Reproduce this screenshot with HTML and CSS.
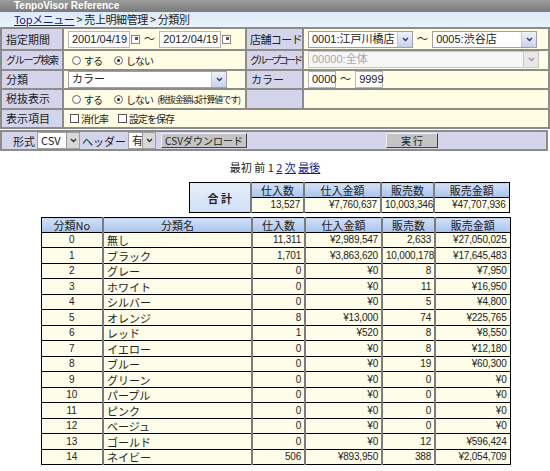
FILE: index.html
```html
<!DOCTYPE html>
<html lang="ja">
<head>
    <meta charset="UTF-8">
    <title>TenpoVisor Reference</title>
    <link rel="stylesheet" href="styles.css">
</head>
<body>
    <div class="titlebar">TenpoVisor Reference</div>
    <div class="crumbs"><a href="#">Topメニュー</a> &gt; 売上明細管理 &gt; 分類別</div>

    <table class="cond">
        <colgroup>
            <col style="width: 62px">
            <col style="width: 183px">
            <col style="width: 57px">
            <col style="width: 246px">
        </colgroup>
        <tr class="tall">
            <th class="lab">指定期間</th>
            <td class="val">
                <span class="txt date">2001/04/19</span><span class="cal"><svg width="9" height="9" viewBox="0 0 9 9"><rect x="0.5" y="0.5" width="8" height="8" fill="#fff" stroke="#888"/><rect x="4" y="2" width="3" height="3" fill="#555"/></svg></span>
                <span class="tilde">～</span>
                <span class="txt date">2012/04/19</span><span class="cal"><svg width="9" height="9" viewBox="0 0 9 9"><rect x="0.5" y="0.5" width="8" height="8" fill="#fff" stroke="#888"/><rect x="4" y="2" width="3" height="3" fill="#555"/></svg></span>
            </td>
            <th class="lab shopl">店舗コード</th>
            <td class="val">
                <span class="sel shop"><span class="sel-text">0001:江戸川橋店</span><span class="arr"><svg width="7" height="5" viewBox="0 0 7 5"><path d="M1 1 L3.5 3.5 L6 1" fill="none" stroke="#2a3a7a" stroke-width="1.4"/></svg></span></span>
                <span class="tilde">～</span>
                <span class="sel shop"><span class="sel-text">0005:渋谷店</span><span class="arr"><svg width="7" height="5" viewBox="0 0 7 5"><path d="M1 1 L3.5 3.5 L6 1" fill="none" stroke="#2a3a7a" stroke-width="1.4"/></svg></span></span>
            </td>
        </tr>
        <tr>
            <th class="lab tight">グループ検索</th>
            <td class="val">
                <span class="radio"></span><span class="opt">する</span>
                <span class="radio on"></span><span class="opt">しない</span>
            </td>
            <th class="lab tighter">グループコード</th>
            <td class="val">
                <span class="sel wide off"><span class="sel-text">00000:全体</span><span class="arr"><svg width="7" height="5" viewBox="0 0 7 5"><path d="M1 1 L3.5 3.5 L6 1" fill="none" stroke="#999" stroke-width="1.4"/></svg></span></span>
            </td>
        </tr>
        <tr>
            <th class="lab">分類</th>
            <td class="val">
                <span class="sel cat"><span class="sel-text">カラー</span><span class="arr"><svg width="7" height="5" viewBox="0 0 7 5"><path d="M1 1 L3.5 3.5 L6 1" fill="none" stroke="#2a3a7a" stroke-width="1.4"/></svg></span></span>
            </td>
            <th class="lab">カラー</th>
            <td class="val">
                <span class="txt code">0000</span>
                <span class="tilde">～</span>
                <span class="txt code">9999</span>
            </td>
        </tr>
        <tr>
            <th class="lab">税抜表示</th>
            <td class="val">
                <span class="radio"></span><span class="opt">する</span>
                <span class="radio on"></span><span class="opt">しない</span>
                <span class="note">(税抜金額は計算値です)</span>
            </td>
            <th class="lab"></th>
            <td class="val"></td>
        </tr>
        <tr>
            <th class="lab">表示項目</th>
            <td class="val" colspan="3">
                <span class="check"></span><span class="opt">消化率</span>
                <span class="check"></span><span class="opt">設定を保存</span>
            </td>
        </tr>
    </table>

    <div class="actions">
        <div class="export">
            <span>形式</span>
            <span class="sel small fmt"><span class="sel-text">CSV</span><span class="arr"><svg width="7" height="5" viewBox="0 0 7 5"><path d="M1 1 L3.5 3.5 L6 1" fill="none" stroke="#333" stroke-width="1.4"/></svg></span></span>
            <span>ヘッダー</span>
            <span class="sel small hdr"><span class="sel-text">有</span><span class="arr"><svg width="7" height="5" viewBox="0 0 7 5"><path d="M1 1 L3.5 3.5 L6 1" fill="none" stroke="#333" stroke-width="1.4"/></svg></span></span>
            <button class="btn csv">CSVダウンロード</button>
        </div>
        <button class="btn run">実 行</button>
    </div>

    <div class="pager">最初 前 1 <a href="#">2</a> <a href="#">次</a> <a href="#">最後</a></div>

    <div class="result">
        <table class="grid total">
            <colgroup>
                <col style="width: 62px">
                <col style="width: 53px">
                <col style="width: 77px">
                <col style="width: 53px">
                <col style="width: 75px">
            </colgroup>
            <tr class="head">
                <th class="sum" rowspan="2">合 計</th>
                <th>仕入数</th>
                <th>仕入金額</th>
                <th>販売数</th>
                <th>販売金額</th>
            </tr>
            <tr>
                <td class="num">13,527</td>
                <td class="num">¥7,760,637</td>
                <td class="num">10,003,346</td>
                <td class="num">¥47,707,936</td>
            </tr>
        </table>

        <table class="grid detail">
            <colgroup>
                <col style="width: 62px">
                <col style="width: 149px">
                <col style="width: 53px">
                <col style="width: 77px">
                <col style="width: 53px">
                <col style="width: 75px">
            </colgroup>
            <tr class="head">
                <th>分類No</th>
                <th>分類名</th>
                <th>仕入数</th>
                <th>仕入金額</th>
                <th>販売数</th>
                <th>販売金額</th>
            </tr>
            <tr><td class="no">0</td><td>無し</td><td class="num">11,311</td><td class="num">¥2,989,547</td><td class="num">2,633</td><td class="num">¥27,050,025</td></tr>
            <tr><td class="no">1</td><td>ブラック</td><td class="num">1,701</td><td class="num">¥3,863,620</td><td class="num">10,000,178</td><td class="num">¥17,645,483</td></tr>
            <tr><td class="no">2</td><td>グレー</td><td class="num">0</td><td class="num">¥0</td><td class="num">8</td><td class="num">¥7,950</td></tr>
            <tr><td class="no">3</td><td>ホワイト</td><td class="num">0</td><td class="num">¥0</td><td class="num">11</td><td class="num">¥16,950</td></tr>
            <tr><td class="no">4</td><td>シルバー</td><td class="num">0</td><td class="num">¥0</td><td class="num">5</td><td class="num">¥4,800</td></tr>
            <tr><td class="no">5</td><td>オレンジ</td><td class="num">8</td><td class="num">¥13,000</td><td class="num">74</td><td class="num">¥225,765</td></tr>
            <tr><td class="no">6</td><td>レッド</td><td class="num">1</td><td class="num">¥520</td><td class="num">8</td><td class="num">¥8,550</td></tr>
            <tr><td class="no">7</td><td>イエロー</td><td class="num">0</td><td class="num">¥0</td><td class="num">8</td><td class="num">¥12,180</td></tr>
            <tr><td class="no">8</td><td>ブルー</td><td class="num">0</td><td class="num">¥0</td><td class="num">19</td><td class="num">¥60,300</td></tr>
            <tr><td class="no">9</td><td>グリーン</td><td class="num">0</td><td class="num">¥0</td><td class="num">0</td><td class="num">¥0</td></tr>
            <tr><td class="no">10</td><td>パープル</td><td class="num">0</td><td class="num">¥0</td><td class="num">0</td><td class="num">¥0</td></tr>
            <tr><td class="no">11</td><td>ピンク</td><td class="num">0</td><td class="num">¥0</td><td class="num">0</td><td class="num">¥0</td></tr>
            <tr><td class="no">12</td><td>ベージュ</td><td class="num">0</td><td class="num">¥0</td><td class="num">0</td><td class="num">¥0</td></tr>
            <tr><td class="no">13</td><td>ゴールド</td><td class="num">0</td><td class="num">¥0</td><td class="num">12</td><td class="num">¥596,424</td></tr>
            <tr><td class="no">14</td><td>ネイビー</td><td class="num">506</td><td class="num">¥893,950</td><td class="num">388</td><td class="num">¥2,054,709</td></tr>
        </table>
    </div>
</body>
</html>
```

FILE: styles.css
```css
body {
    margin: 0;
    font-family: "Liberation Sans", "Noto Sans CJK JP", sans-serif;
    font-size: 11px;
    color: #222;
    background: #fff;
}
.lab,
.opt,
.note,
.grid th,
.grid td,
.crumbs,
.btn,
.pager,
.actions span {
    font-family: "Noto Sans CJK JP", "Liberation Sans", sans-serif;
}
.grid td.num,
.grid td.no,
.txt,
.sel-text {
    font-family: "Liberation Sans", "Noto Sans CJK JP", sans-serif;
}
.titlebar {
    height: 12px;
    line-height: 12px;
    padding-left: 14px;
    background: linear-gradient(#9c9c9c, #7a7a7a);
    color: #fff;
    font-size: 10px;
    font-weight: bold;
}
.crumbs {
    height: 15px;
    line-height: 15px;
    padding-left: 14px;
    letter-spacing: -0.4px;
    background: linear-gradient(#dce9f7, #eaf2fb);
}
.crumbs a {
    color: #10208a;
}

/* search conditions */
.cond {
    width: 548px;
    table-layout: fixed;
    border-collapse: collapse;
    border: 2px solid #8c8c8c;
}
.cond th,
.cond td {
    border: 2px solid #8c8c8c;
    height: 17.6px;
    padding: 0 4px;
    line-height: 15px;
    white-space: nowrap;
    overflow: hidden;
}
.cond tr.tall th,
.cond tr.tall td {
    height: 20px;
}
.lab {
    background: #d4d4ea;
    font-weight: normal;
    text-align: left;
    padding-left: 5px;
}
.cond th.shopl {
    padding-left: 3px;
    letter-spacing: -0.6px;
}
.cond th.tight {
    font-size: 10px;
    letter-spacing: -1.3px;
    padding-left: 4px;
}
.cond th.tighter {
    font-size: 10px;
    letter-spacing: -2.7px;
    padding-left: 3px;
}
.val {
    background: #fffde3;
}
.txt {
    display: inline-block;
    vertical-align: middle;
    height: 15px;
    line-height: 15px;
    padding: 0 3px;
    background: #fff;
    border: 1px solid #b8b8b8;
}
.date {
    width: 54px;
}
.code {
    width: 20px;
}
.cal {
    display: inline-block;
    vertical-align: middle;
    margin-left: 1px;
    line-height: 0;
}
.tilde {
    display: inline-block;
    vertical-align: middle;
    margin: 0 1px;
}
.sel {
    display: inline-flex;
    vertical-align: middle;
    height: 15px;
    line-height: 15px;
    background: #fff;
    border: 1px solid #a0a0a0;
}
.sel-text {
    flex: 1;
    padding-left: 3px;
    overflow: hidden;
}
.arr {
    width: 14px;
    display: flex;
    align-items: center;
    justify-content: center;
    background: linear-gradient(#eef2fa, #c8d2e8);
    border-left: 1px solid #c0c8dc;
}
.shop {
    width: 103px;
}
.wide {
    width: 229px;
}
.cat {
    width: 157px;
}
.off {
    color: #a8a8a8;
    background: #f6f6f6;
    border-color: #c8c8c8;
}
.off .arr {
    background: #e8e8e8;
}
.radio {
    display: inline-block;
    vertical-align: middle;
    width: 7px;
    height: 7px;
    border: 1px solid #666;
    border-radius: 50%;
    background: #fff;
    margin: 0 3px 0 4px;
    position: relative;
}
.radio.on::after {
    content: "";
    position: absolute;
    left: 2px;
    top: 2px;
    width: 3px;
    height: 3px;
    border-radius: 50%;
    background: #222;
}
.opt {
    vertical-align: middle;
    font-size: 10px;
    letter-spacing: -1px;
    margin-right: 5px;
}
.note {
    vertical-align: middle;
    font-size: 9px;
    letter-spacing: -1.1px;
    margin-left: -4px;
}
.check {
    display: inline-block;
    vertical-align: middle;
    width: 7px;
    height: 7px;
    border: 1px solid #555;
    background: #fff;
    margin: 0 2px 0 2px;
}

/* export / run */
.actions {
    display: flex;
    align-items: center;
    width: 544px;
    height: 15px;
    margin-top: 1px;
    padding: 1px 0;
    background: #d4d4ea;
    border: 2px solid #8c8c8c;
}
.export {
    display: flex;
    align-items: center;
    justify-content: flex-end;
    gap: 2px;
    width: 245px;
}
.small .arr {
    background: #d8d8d8;
    border-left: 1px solid #999;
    width: 12px;
}
.fmt {
    width: 41px;
}
.hdr {
    width: 26px;
}
.btn {
    height: 15px;
    padding: 0;
    font-size: 10px;
    line-height: 13px;
    color: #222;
    background: #c4c4c4;
    border: 1px solid;
    border-color: #f0f0f0 #404040 #404040 #f0f0f0;
}
.csv {
    width: 86px;
    margin-left: 3px;
}
.run {
    width: 52px;
    margin-left: 139px;
}

.pager {
    margin-top: 10px;
    text-align: center;
    line-height: 13px;
}
.pager a {
    color: #10208a;
}

/* results */
.result {
    width: 469px;
    margin: 8px auto 0;
    display: flex;
    flex-direction: column;
}
.grid {
    table-layout: fixed;
    border-collapse: collapse;
    border: 1px solid #000;
}
.grid tr {
    height: 15.5px;
}
.grid tr.head {
    height: 14.5px;
}
.grid th,
.grid td {
    padding: 0 3px;
    line-height: 12px;
    border: 1px solid #000;
    border-left: 2px solid #7c7c7c;
    border-right: 2px solid #7c7c7c;
    white-space: nowrap;
    overflow: hidden;
}
.grid th {
    font-weight: normal;
    background: linear-gradient(#d2e0f6, #a9c3ec);
}
.grid th:first-child,
.grid td:first-child {
    border-left: 1px solid #000;
}
.grid th:last-child,
.grid td:last-child {
    border-right: 1px solid #000;
}
.grid td {
    background: #fefdea;
}
.total {
    align-self: flex-end;
    width: 320px;
}
.total th.sum {
    font-weight: bold;
    background: linear-gradient(#e6eefa, #cfdff5);
    border-right: 2px solid #7c7c7c;
}
.detail {
    width: 469px;
    margin-top: 4px;
}
.grid td.num {
    text-align: right;
    font-size: 10px;
    letter-spacing: -0.2px;
}
.grid td.no {
    text-align: center;
    font-size: 10px;
}
```
